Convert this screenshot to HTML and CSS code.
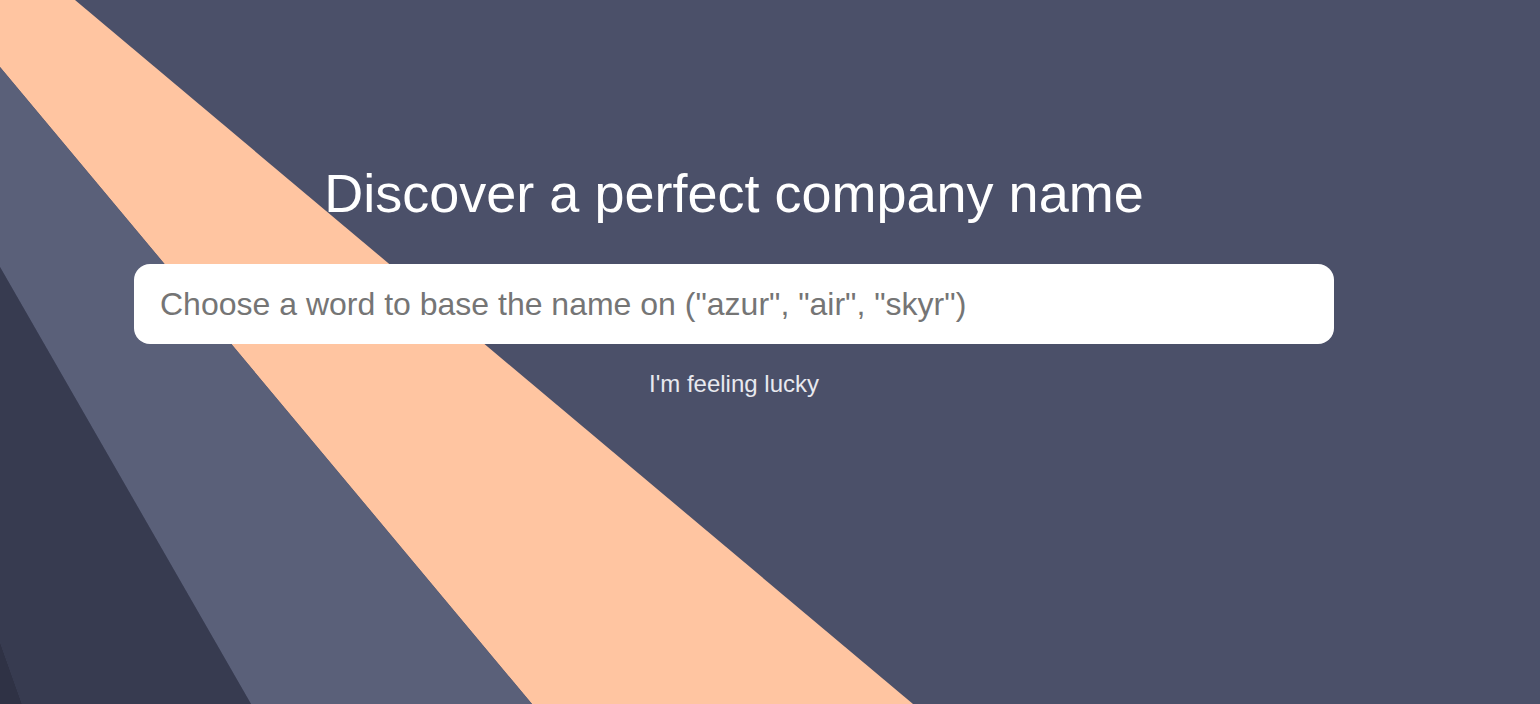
FILE: index.html
```html
<!DOCTYPE html>
<html lang="en">
<head>
<meta charset="utf-8">
<title>Discover a perfect company name</title>
<link rel="stylesheet" href="styles.css">
</head>
<body>
<svg class="bg" width="1540" height="704" viewBox="0 0 1540 704" aria-hidden="true">
  <polygon class="peach" points="0,0 75,0 913,704 532,704 0,67"/>
  <polygon class="slate" points="0,67 532,704 251,704 0,267"/>
  <polygon class="dark" points="0,267 251,704 22,704 0,642"/>
  <polygon class="darkest" points="0,642 22,704 0,704"/>
</svg>
<main class="main">
  <h1 class="title">Discover a perfect company name</h1>
  <input class="search" type="text" placeholder="Choose a word to base the name on (&quot;azur&quot;, &quot;air&quot;, &quot;skyr&quot;)">
  <a class="lucky" href="#">I'm feeling lucky</a>
</main>
</body>
</html>
```
FILE: styles.css
```css
html, body {
  margin: 0;
  padding: 0;
  height: 100%;
  overflow: hidden;
}
body {
  background: #4b5069;
  font-family: "Liberation Sans", Arial, Helvetica, sans-serif;
  position: relative;
}
.bg {
  position: absolute;
  left: 0;
  top: 0;
  display: block;
}
.peach { fill: #ffc5a1; }
.slate { fill: #5a6079; }
.dark { fill: #373b50; }
.darkest { fill: #2f3245; }
.main {
  position: relative;
  width: 1200px;
  margin-left: 134px;
  padding-top: 161px;
  display: flex;
  flex-direction: column;
  align-items: center;
}
.title {
  margin: 0;
  font-weight: normal;
  font-size: 54px;
  line-height: 64px;
  color: #ffffff;
}
.search {
  box-sizing: border-box;
  margin-top: 39px;
  width: 1200px;
  height: 80px;
  border: none;
  border-radius: 16px;
  background: #ffffff;
  padding: 0 26px;
  font-family: "Liberation Sans", Arial, Helvetica, sans-serif;
  font-size: 32px;
  color: #333;
  outline: none;
}
.search::placeholder {
  color: #757575;
  opacity: 1;
}
.lucky {
  margin-top: 26px;
  font-size: 24px;
  line-height: 28px;
  color: #e8e9ef;
  text-decoration: none;
}
```
